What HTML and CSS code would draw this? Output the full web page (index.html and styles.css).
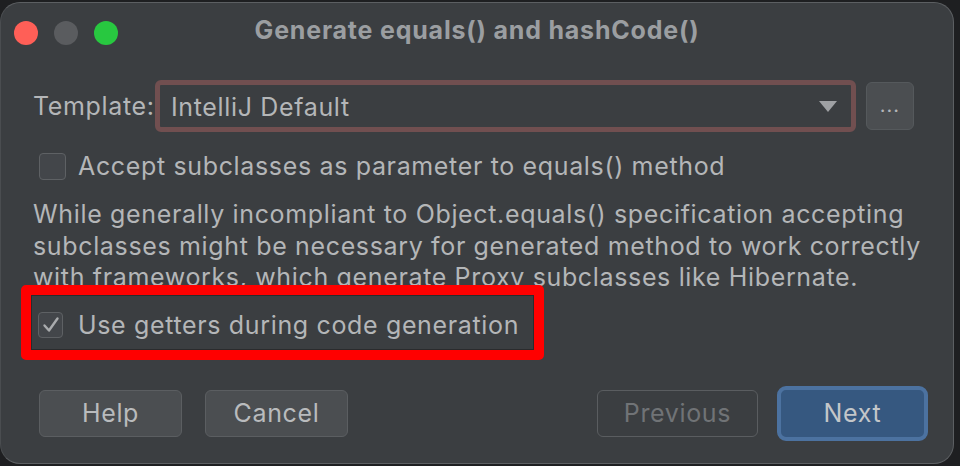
FILE: index.html
```html
<!DOCTYPE html>
<html>
<head>
<meta charset="utf-8">
<link rel="stylesheet" href="styles.css">
</head>
<body>
<div class="window">
  <div class="titlebar">
    <div class="lights">
      <span class="light red"></span>
      <span class="light gray"></span>
      <span class="light green"></span>
    </div>
    <div class="title">Generate equals() and hashCode()</div>
  </div>
  <div class="content">
    <div class="template-row">
      <span class="label">Template:</span>
      <div class="combo">
        <span class="combo-text">IntelliJ Default</span>
        <svg class="arrow" width="18" height="11" viewBox="0 0 18 11"><path d="M0 0 H18 L9 11 Z" fill="#9fa1a4"/></svg>
      </div>
      <div class="more">...</div>
    </div>
    <label class="check-row first">
      <span class="box"></span>
      <span class="check-text">Accept subclasses as parameter to equals() method</span>
    </label>
    <p class="desc">While generally incompliant to Object.equals() specification accepting subclasses might be necessary for generated method to work correctly with frameworks, which generate Proxy subclasses like Hibernate.</p>
    <div class="highlight-wrap">
      <label class="check-row getters">
        <span class="box checked">
          <svg width="20" height="20" viewBox="0 0 20 20"><path d="M3.5 10.5 L8 15.5 L16.5 3.5" fill="none" stroke="#a9abad" stroke-width="2.4" stroke-linecap="round" stroke-linejoin="round"/></svg>
        </span>
        <span class="check-text">Use getters during code generation</span>
      </label>
      <div class="highlight"></div>
    </div>
    <div class="buttons">
      <div class="btn">Help</div>
      <div class="btn">Cancel</div>
      <div class="spacer"></div>
      <div class="btn disabled">Previous</div>
      <div class="btn primary">Next</div>
    </div>
  </div>
</div>
</body>
</html>
```
FILE: styles.css
```css
html, body {
  margin: 0;
  padding: 0;
  background: #1e1f21;
  width: 960px;
  height: 466px;
  overflow: hidden;
}
body {
  font-family: Inter, "Noto Sans", sans-serif;
  color: #b4b6b8;
  letter-spacing: 0.65px;
}
.window {
  box-sizing: border-box;
  margin-top: 2px;
  width: 954px;
  height: 462px;
  background: #3b3e41;
  border: 1px solid #5c5f62;
  border-left-color: #4a4d50;
  border-radius: 20px;
  display: flex;
  flex-direction: column;
}
.titlebar {
  height: 58px;
  display: flex;
  align-items: center;
  position: relative;
}
.lights {
  display: flex;
  gap: 16px;
  padding-left: 13px;
  padding-top: 2px;
}
.light {
  width: 24px;
  height: 24px;
  border-radius: 50%;
  display: block;
}
.light.red { background: #ff5f57; }
.light.gray { background: #5a5c5f; }
.light.green { background: #28c840; }
.title {
  position: absolute;
  left: 0;
  right: 0;
  top: 12px;
  text-align: center;
  font-size: 25px;
  letter-spacing: 0.8px;
  font-weight: 700;
  color: #9b9ea1;
}
.content {
  padding-left: 32px;
  padding-right: 38px;
}
.template-row {
  display: flex;
  align-items: center;
  margin-top: 19px;
  height: 52px;
}
.label {
  font-size: 25px;
  width: 122px;
}
.combo {
  box-sizing: border-box;
  width: 701px;
  height: 52px;
  border: 5px solid #714f50;
  border-radius: 6px;
  display: flex;
  align-items: center;
  padding-left: 11px;
  padding-right: 14px;
}
.combo-text {
  font-size: 25px;
  flex: 1;
  padding-top: 2px;
}
.arrow {
  display: block;
}
.more {
  box-sizing: border-box;
  margin-left: 10px;
  width: 48px;
  height: 48px;
  background: #4b4e51;
  border: 1px solid #55595c;
  border-radius: 6px;
  font-size: 20px;
  text-align: center;
  line-height: 44px;
  letter-spacing: 1px;
  color: #b4b6b8;
}
.check-row {
  display: flex;
  align-items: center;
  height: 32px;
}
.check-row.first {
  margin-top: 18px;
  padding-left: 6px;
}
.box {
  box-sizing: border-box;
  width: 27px;
  height: 27px;
  border: 1px solid #5e6164;
  background: #43464a;
  border-radius: 4px;
  margin-right: 12px;
  display: flex;
  align-items: center;
  justify-content: center;
}
.check-text {
  font-size: 25px;
}
.desc {
  margin: 17px 0 0 0;
  font-size: 25px;
  line-height: 31.5px;
  width: 895px;
}
.highlight-wrap {
  position: relative;
  height: 64px;
}
.check-row.getters {
  padding-left: 5px;
  padding-top: 15px;
}
.box.checked {
  width: 25px;
  height: 26px;
  margin-right: 15px;
}
.highlight {
  position: absolute;
  left: -12px;
  top: -9px;
  width: 523px;
  height: 75px;
  box-sizing: border-box;
  border: 10px solid #ff0000;
  border-radius: 5px;
  box-shadow: inset 0 0 0 1px #2a2b2d;
}
.buttons {
  display: flex;
  align-items: center;
  margin-top: 28px;
  padding-left: 6px;
  gap: 23px;
}
.spacer { flex: 1; }
.btn {
  box-sizing: border-box;
  height: 47px;
  width: 143px;
  background: #4b4e51;
  border: 1px solid #5b5e61;
  border-radius: 6px;
  font-size: 25px;
  text-align: center;
  line-height: 45px;
  color: #b9bbbd;
}
.btn.disabled {
  background: transparent;
  border-color: #5a5d60;
  color: #707376;
  width: 161px;
  margin-right: -4px;
}
.btn.primary {
  width: 151px;
  height: 55px;
  line-height: 47px;
  background: #365880;
  border: 4px solid #4c72a0;
  border-radius: 9px;
  color: #c3c6c9;
  margin-right: -13px;
}
```
